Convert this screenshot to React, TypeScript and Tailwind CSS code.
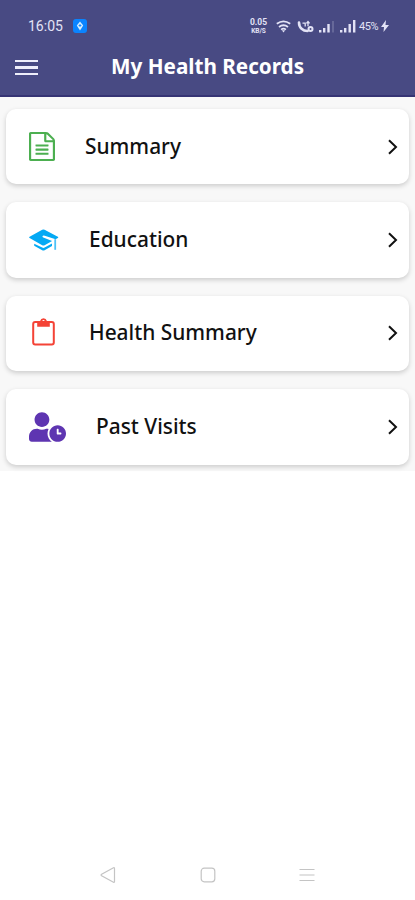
import type { ReactNode } from "react";
import { FaUserClock } from "react-icons/fa";

function FileIcon() {
  return (
    <svg className="-mt-px ml-[.5px] h-[29px] w-[26px] text-[#4caf50]" viewBox="0 0 1536 1792" preserveAspectRatio="none" fill="currentColor">
      <path d="M1468 380q28 28 48 76t20 88v1152q0 40-28 68t-68 28h-1344q-40 0-68-28t-28-68v-1600q0-40 28-68t68-28h896q40 0 88 20t76 48zM1024 136v376h376q-10-29-22-41l-313-313q-12-12-41-22zM1408 1664v-1024h-416q-40 0-68-28t-28-68v-416h-768v1536h1280zM384 800q0-14 9-23t23-9h704q14 0 23 9t9 23v64q0 14-9 23t-23 9h-704q-14 0-23-9t-9-23v-64zM1120 1024q14 0 23 9t9 23v64q0 14-9 23t-23 9h-704q-14 0-23-9t-9-23v-64q0-14 9-23t23-9h704zM1120 1280q14 0 23 9t9 23v64q0 14-9 23t-23 9h-704q-14 0-23-9t-9-23v-64q0-14 9-23t23-9h704z" />
    </svg>
  );
}

function CapIcon() {
  return (
    <svg className="-mt-px ml-px h-[22px] w-[30px] text-[#03a9f4]" viewBox="0 0 30 22">
      <path
        d="M13.2.7q1.2-.6 2.4 0l13.2 7.1q.9.6 0 1.2l-2.2 1.3-10.8-3.6q-1.9-.5-2.3.5-.3 1 1.4 1.5l8.2 3.3-7.5 4.2q-1.2.6-2.4 0L.6 9Q-.3 8.4.6 7.8z"
        fill="currentColor"
      />
      <path d="M5.2 14.7v2l8 4.6q1.2.6 2.4 0l7.4-4.3v-2.6l-7.4 4.2q-1.2.6-2.4 0z" fill="currentColor" />
      <path d="M26.2 10.2v10.6" stroke="currentColor" strokeWidth="1.8" opacity=".7" />
    </svg>
  );
}

function ClipboardIcon() {
  return (
    <svg className="-mt-[2px] ml-[4px] h-[28px] w-[23px] text-[#f44336]" viewBox="0 0 23 28">
      <rect x="1.2" y="4" width="20.6" height="22.6" rx="2" fill="none" stroke="currentColor" strokeWidth="2" />
      <path
        d="M5.2 3h2.9a3.5 3.5 0 0 1 6.8 0h2.9v5.8H5.2zM11.5 2a1.2 1.2 0 1 0 0 2.4 1.2 1.2 0 0 0 0-2.4z"
        fill="currentColor"
        fillRule="evenodd"
      />
    </svg>
  );
}

type Record = {
  label: string;
  icon: ReactNode;
  iconBox: string;
};

const records: Record[] = [
  { label: "Summary", icon: <FileIcon />, iconBox: "w-[57px]" },
  { label: "Education", icon: <CapIcon />, iconBox: "w-[61px]" },
  { label: "Health Summary", icon: <ClipboardIcon />, iconBox: "w-[61px]" },
  {
    label: "Past Visits",
    icon: <FaUserClock className="ml-[.5px] h-[30px] w-[37px] text-[#5e35b1]" />,
    iconBox: "w-[68px]",
  },
];

function StatusBar() {
  return (
    <div className="flex h-[52px] items-center pr-[26px] pl-[28px] text-[#e3e3f6]">
      <span className="w-[45px] font-['Roboto',sans-serif] text-[14px] leading-none">16:05</span>
      <svg className="h-[14px] w-[14px]" viewBox="0 0 14 14">
        <rect width="14" height="14" rx="3" fill="#0a84ff" />
        <path d="M7 2.5 10.2 6.5 7 11.5 3.8 6.5Z" fill="#d5edff" />
        <path d="M7 5v3M5.6 6.5h2.8" stroke="#0a84ff" strokeWidth=".9" />
      </svg>
      <div className="ml-auto flex items-center">
        <div className="flex w-[19px] flex-col items-center font-['Roboto',sans-serif] font-bold">
          <span className="text-[8.5px] leading-[9px]">0.05</span>
          <span className="text-[6.5px] leading-[8px]">KB/S</span>
        </div>
        <svg className="ml-[8px] h-[13px] w-[15px]" viewBox="0 0 15 13" fill="none" stroke="currentColor" strokeWidth="1.8">
          <path d="M.8 3.8q6.7-5 13.4 0M3 6.9q4.5-3.3 9 0M5.1 9.6q2.4-1.8 4.8 0" />
          <path d="M5.8 10.2h3.4L7.5 12.5z" fill="currentColor" stroke="none" />
        </svg>
        <svg className="ml-[6px] h-[13px] w-[17px]" viewBox="0 0 17 13" fill="none" stroke="currentColor">
          <path d="M2 2.5C2 8 6 11 10.5 11" strokeWidth="2.6" strokeLinecap="round" />
          <path d="M5.5 3.2h2.7v3.2M11 2v4.2M9.4 3.4 11 1.6l1.6 1.8" strokeWidth="1.3" />
          <circle cx="13.5" cy="9" r="2" strokeWidth="2" />
        </svg>
        <svg className="ml-[5px] h-[13px] w-[16px]" viewBox="0 0 16 13" fill="currentColor">
          <path d="M0 10h2.4v2.5H0zM4 8h2.4v4.5H4zM8.3 4h2.4v8.5H8.3z" />
          <path d="M13 1h2v11.5h-2z" opacity=".2" />
        </svg>
        <svg className="ml-[5px] h-[13px] w-[16px]" viewBox="0 0 16 13" fill="currentColor">
          <path d="M0 10h2.4v2.5H0zM4 8h2.4v4.5H4zM8.5 4h2.4v8.5H8.5zM13 0h2.4v12.5H13z" />
        </svg>
        <span className="ml-[3px] w-[20px] font-['Roboto',sans-serif] text-[11px] leading-none tracking-[-0.4px] whitespace-nowrap">
          45%
        </span>
        <svg className="ml-[2px] h-[12px] w-[8px]" viewBox="0 0 8 12" fill="currentColor">
          <path d="M5 0 0 7h3l-.5 5L8 5H4.5z" />
        </svg>
      </div>
    </div>
  );
}

export default function App() {
  return (
    <div className="flex h-[900px] w-[415px] flex-col overflow-hidden bg-white font-['Noto_Sans',sans-serif]">
      <header className="h-[97px] shrink-0 border-b-2 border-[#363474] bg-[#484a83]">
        <StatusBar />
        <div className="flex h-[30px] items-center pl-[15px]">
          <button className="mt-px flex w-[23px] flex-col gap-[4px]" aria-label="Menu">
            <span className="h-[2.5px] bg-[#eeeefa]" />
            <span className="h-[2.5px] bg-[#eeeefa]" />
            <span className="h-[2.5px] bg-[#eeeefa]" />
          </button>
          <h1 className="ml-[73px] pb-[2px] text-[20.7px] leading-[28px] font-bold whitespace-nowrap text-white">
            My Health Records
          </h1>
        </div>
      </header>

      <main className="flex h-[374px] shrink-0 flex-col gap-[18px] bg-[#f8f8f8] px-[6px] pt-[12px]">
        {records.map((record) => (
          <div
            key={record.label}
            className="flex h-[75.4px] shrink-0 items-center rounded-[10px] bg-white pr-[10px] pl-[22px] shadow-[0_2px_5px_rgba(0,0,0,0.18)]"
          >
            <div className={record.iconBox}>{record.icon}</div>
            <span className="pb-[2px] text-[20.9px] leading-[28px] font-medium whitespace-nowrap text-[#111]">
              {record.label}
            </span>
            <svg className="ml-auto h-[16px] w-[12px]" viewBox="0 0 12 16" fill="none" stroke="#111" strokeWidth="2">
              <path d="M2 1.2 9 8l-7 6.8" />
            </svg>
          </div>
        ))}
      </main>

      <nav className="mt-auto flex h-[50px] items-center justify-between px-[100px] text-[#c4c4c4]">
        <svg className="h-[18px] w-[16px]" viewBox="0 0 16 18" fill="none" stroke="currentColor" strokeWidth="1.2">
          <path d="M13.5 1.8q1-.5 1 .6v13.2q0 1.1-1 .6L1.6 9.7q-1-.7 0-1.4z" />
        </svg>
        <svg className="h-[16px] w-[16px]" viewBox="0 0 16 16" fill="none" stroke="currentColor" strokeWidth="1.2">
          <rect x="1.2" y="1.2" width="13.6" height="13.6" rx="3" />
        </svg>
        <svg className="h-[14px] w-[16px]" viewBox="0 0 16 14" fill="none" stroke="currentColor" strokeWidth="1.2">
          <path d="M.5 1.5h15M.5 7h15M.5 12.5h15" />
        </svg>
      </nav>
    </div>
  );
}
